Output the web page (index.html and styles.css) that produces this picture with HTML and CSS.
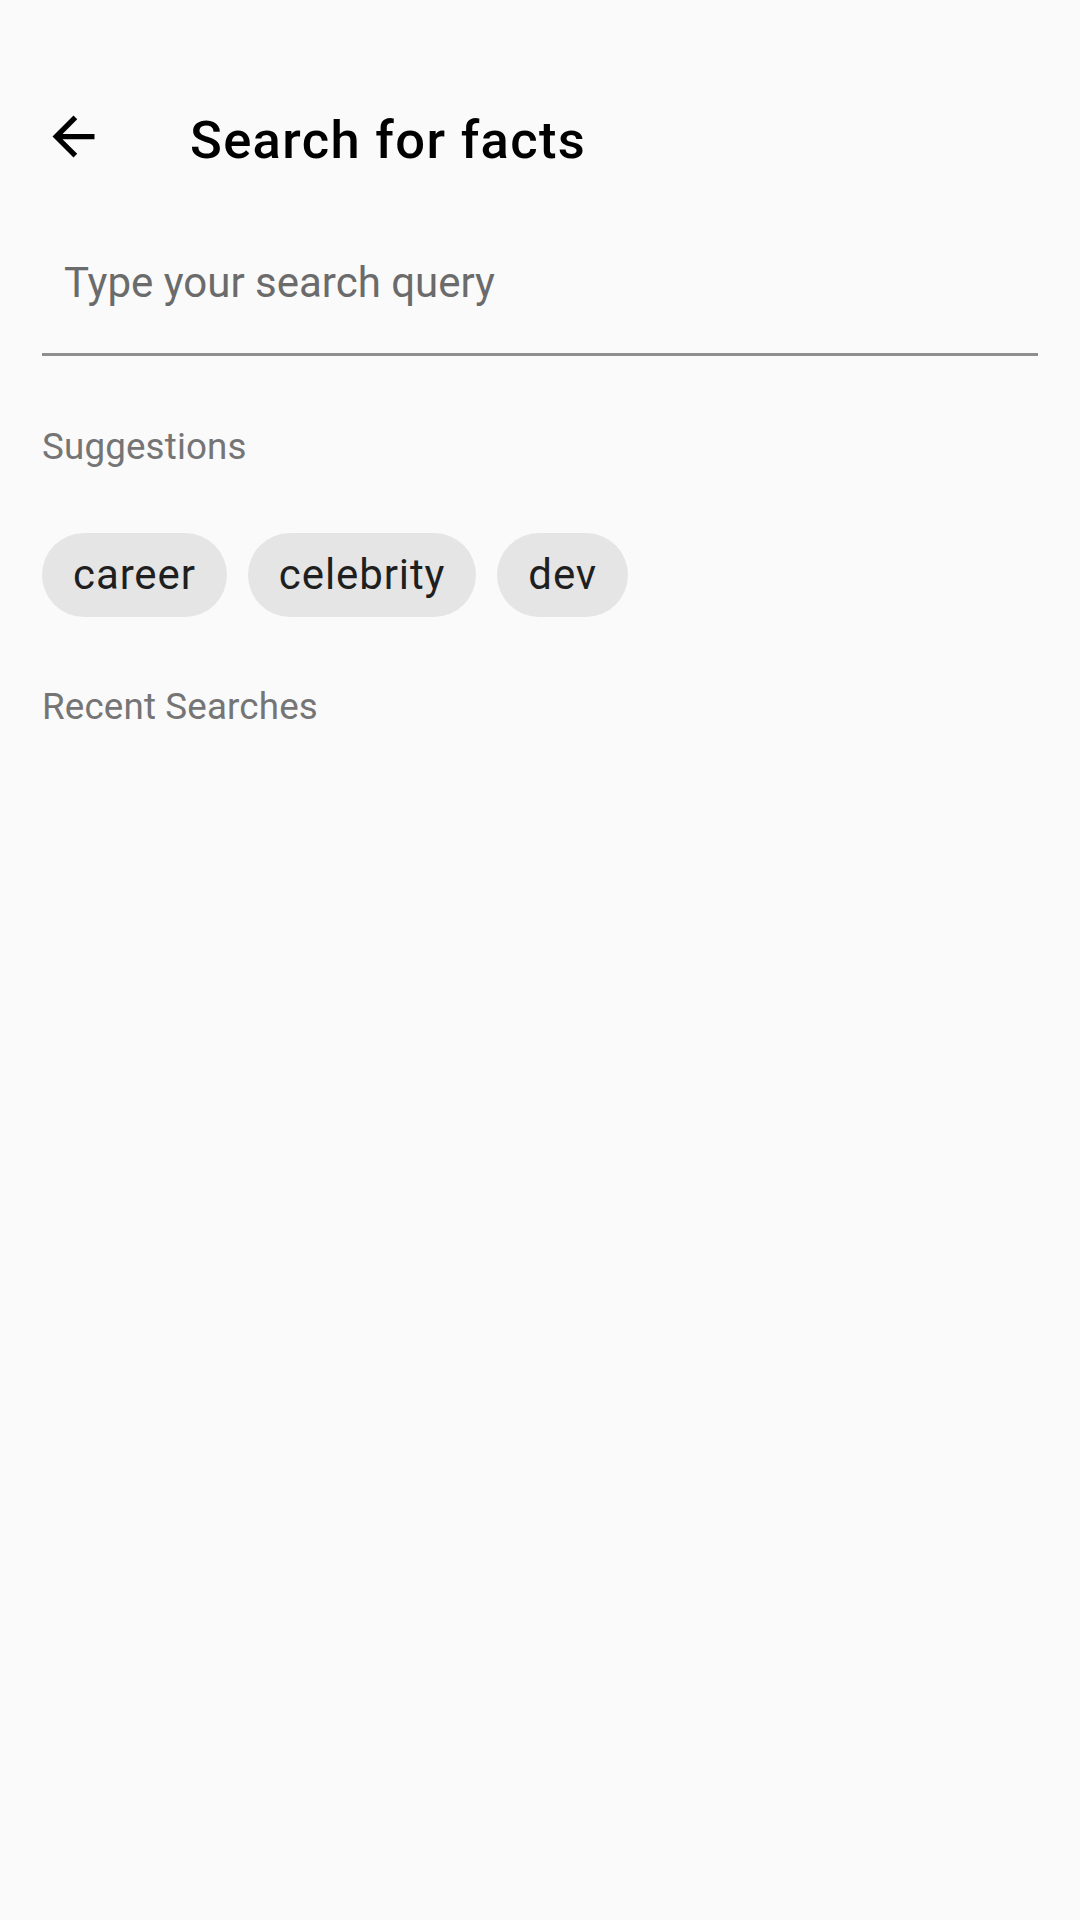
FILE: index.html
```html
<!DOCTYPE html>
<html>
<head>
<meta charset="utf-8">
<link rel="stylesheet" href="styles.css">
</head>
<body>
<div class="screen">
  <div class="toolbar">
    <div class="nav">
      <svg viewBox="0 0 24 24" width="63" height="63"><path d="M20 11H7.83l5.59-5.59L12 4l-8 8 8 8 1.41-1.41L7.83 13H20v-2z" fill="#000"/></svg>
    </div>
    <div class="title">Search for facts</div>
  </div>
  <div class="field">
    <div class="placeholder">Type your search query</div>
  </div>
  <div class="label label-suggest">Suggestions</div>
  <div class="chips">
    <div class="chip">career</div>
    <div class="chip">celebrity</div>
    <div class="chip">dev</div>
  </div>
  <div class="label label-recent">Recent Searches</div>
</div>
</body>
</html>
```
FILE: styles.css
```css
html, body {
  margin: 0;
  padding: 0;
  background: #fafafa;
}
body {
  font-family: Roboto, "Noto Sans", sans-serif;
  width: 1080px;
  height: 1920px;
  overflow: hidden;
}
.screen {
  padding-top: 63px;
}
.toolbar {
  height: 147px;
  display: flex;
  align-items: center;
}
.nav {
  width: 63px;
  height: 63px;
  margin-left: 42px;
  display: flex;
}
.title {
  margin-left: 85px;
  font-size: 52.5px;
  line-height: 62px;
  padding-top: 6px;
  font-weight: 500;
  letter-spacing: 1.35px;
  color: #000;
}
.field {
  margin: 0 42px;
  padding: 48px 0 45px 22px;
  border-bottom: 3px solid #8e8e8e;
}
.placeholder {
  font-size: 42px;
  line-height: 50px;
  color: #6b6b6b;
}
.label {
  margin-left: 42px;
  font-size: 36.75px;
  line-height: 44px;
  letter-spacing: 0.15px;
  color: #757575;
}
.label-suggest {
  margin-top: 69px;
}
.chips {
  display: flex;
  gap: 21px;
  margin: 64px 42px 0;
}
.chip {
  height: 84px;
  line-height: 84px;
  padding: 0 31px;
  border-radius: 42px;
  background: #e5e5e5;
  color: #1f1f1f;
  font-size: 42px;
  letter-spacing: 0.9px;
}
.label-recent {
  margin-top: 68px;
}
```
